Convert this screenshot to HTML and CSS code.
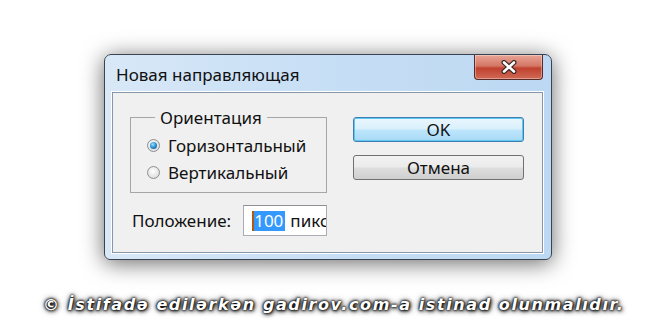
FILE: index.html
```html
<html lang="ru">
  <head>
    <meta charset="UTF-8" />
    <title>Новая направляющая</title>
    <link rel="stylesheet" href="styles.css">
  </head>
  <body>
    <div class="stage">
      <div class="window">
        <div class="titlebar">
          <div class="title">Новая направляющая</div>
          <div class="close">
            <svg width="22" height="14" viewBox="0 0 22 14">
              <path d="M6 2.5 L16 11.5 M16 2.5 L6 11.5" stroke="#3b2626" stroke-width="5" stroke-linecap="round" fill="none" />
              <path d="M6 2.5 L16 11.5 M16 2.5 L6 11.5" stroke="#ffffff" stroke-width="2.6" stroke-linecap="round" fill="none" />
            </svg>
          </div>
        </div>

        <div class="client">
          <div class="top-row">
            <fieldset class="group">
              <legend>Ориентация</legend>
              <div class="radio-item">
                <span class="radio checked"></span>
                <span>Горизонтальный</span>
              </div>
              <div class="radio-item">
                <span class="radio"></span>
                <span>Вертикальный</span>
              </div>
            </fieldset>

            <div class="buttons">
              <div class="btn btn-default">OK</div>
              <div class="btn">Отмена</div>
            </div>
          </div>

          <div class="position-row">
            <span class="label">Положение:</span>
            <div class="field">
              <span class="selected">100</span>
              <span class="unit">пикс.</span>
            </div>
          </div>
        </div>
      </div>

      <div class="notice">© İstifadə edilərkən gadirov.com-a istinad olunmalıdır.</div>
    </div>
  </body>
</html>
```

FILE: styles.css
```css
body {
  margin: 0;
  background-color: #ffffff;
  font-family: "Noto Sans", "Open Sans", sans-serif;
}
.stage {
  width: 660px;
  height: 330px;
  display: flex;
  flex-direction: column;
  align-items: flex-start;
  padding: 54px 0 0 104px;
  box-sizing: border-box;
  overflow: hidden;
}
.window {
  width: 448px;
  height: 206px;
  flex-shrink: 0;
  box-sizing: border-box;
  border: 1px solid #3a4352;
  border-radius: 7px 7px 6px 6px;
  background: linear-gradient(90deg, #d8e8f7 0%, #c8dff5 45%, #bcd8f2 100%);
  box-shadow: 0 3px 22px rgba(0, 0, 0, 0.6);
  display: flex;
  flex-direction: column;
}
.titlebar {
  height: 37px;
  display: flex;
  align-items: flex-start;
  justify-content: space-between;
}
.title {
  margin: 8px 0 0 11px;
  font-size: 17px;
  color: #101010;
}
.close {
  width: 69px;
  height: 25px;
  margin-right: 8px;
  box-sizing: border-box;
  border: 1px solid #5a2a26;
  border-top: none;
  border-radius: 0 0 4px 4px;
  background: linear-gradient(#e8a496 0%, #d47766 45%, #c0412e 55%, #d06a55 100%);
  box-shadow: inset 0 0 0 1px rgba(255, 255, 255, 0.35);
  display: flex;
  align-items: center;
  justify-content: center;
}
.client {
  flex: 1;
  margin: 0 8px 6px 7px;
  background-color: #f0f0f0;
  border: 1px solid #8796a8;
  box-shadow: 0 0 0 1px #ffffff;
  padding: 13px 0 0 17px;
  display: flex;
  flex-direction: column;
}
.top-row {
  display: flex;
  align-items: flex-start;
}
.group {
  margin: 0;
  width: 197px;
  height: 87px;
  box-sizing: border-box;
  border: 1px solid #a6a6a6;
  padding: 7px 0 0 16px;
  display: flex;
  flex-direction: column;
  gap: 8px;
}
.group legend {
  margin-left: 8px;
  padding: 0 5px;
  font-size: 17px;
  line-height: 23px;
  color: #111111;
}
.radio-item {
  display: flex;
  align-items: center;
  gap: 8px;
  font-size: 17px;
  color: #111111;
  height: 19px;
}
.radio {
  width: 13px;
  height: 13px;
  border-radius: 50%;
  box-sizing: border-box;
  border: 1px solid #8e8f8f;
  background: radial-gradient(circle at 45% 40%, #ffffff 0%, #e4e4e4 60%, #cfcfcf 100%);
  display: flex;
  align-items: center;
  justify-content: center;
}
.radio.checked::after {
  content: "";
  width: 7px;
  height: 7px;
  border-radius: 50%;
  background: radial-gradient(circle at 40% 35%, #9fe0ff 0%, #2a8ed0 50%, #0c4f87 100%);
}
.buttons {
  margin: 11px 0 0 26px;
  display: flex;
  flex-direction: column;
  gap: 13px;
}
.btn {
  width: 171px;
  height: 25px;
  box-sizing: border-box;
  border: 1px solid #707070;
  border-radius: 3px;
  background: linear-gradient(#f2f2f2 0%, #ebebeb 48%, #dddddd 52%, #cfcfcf 100%);
  display: flex;
  align-items: center;
  justify-content: center;
  font-size: 17px;
  color: #111111;
}
.btn-default {
  border-color: #3c7fb1;
  background: linear-gradient(#eaf6fd 0%, #d9f0fc 48%, #bee6fd 52%, #a7d9f5 100%);
  box-shadow: inset 0 0 0 1px #60c6f2;
}
.position-row {
  margin-top: 12px;
  display: flex;
  align-items: center;
  gap: 12px;
  padding-left: 2px;
}
.position-row .label {
  font-size: 17px;
  color: #111111;
}
.field {
  width: 84px;
  height: 31px;
  flex-shrink: 0;
  box-sizing: border-box;
  border: 1px solid #abadb3;
  border-top-color: #8c8f94;
  background-color: #ffffff;
  padding-left: 8px;
  display: flex;
  align-items: center;
  gap: 5px;
  overflow: hidden;
  white-space: nowrap;
  font-size: 17px;
  color: #111111;
}
.selected {
  background-color: #3399ff;
  color: #ffffff;
  border-left: 2px solid #b05a10;
  padding-right: 2px;
  line-height: 20px;
}
.notice {
  margin: 35px 0 0 -61px;
  font-family: "DejaVu Sans", sans-serif;
  font-weight: bold;
  font-style: italic;
  font-size: 16px;
  letter-spacing: 1.6px;
  color: #ffffff;
  white-space: nowrap;
  text-shadow: 0 0 2px #000, 0 0 3px #000, 1px 1px 4px #000, 0 0 6px rgba(0, 0, 0, 0.8);
}
```
